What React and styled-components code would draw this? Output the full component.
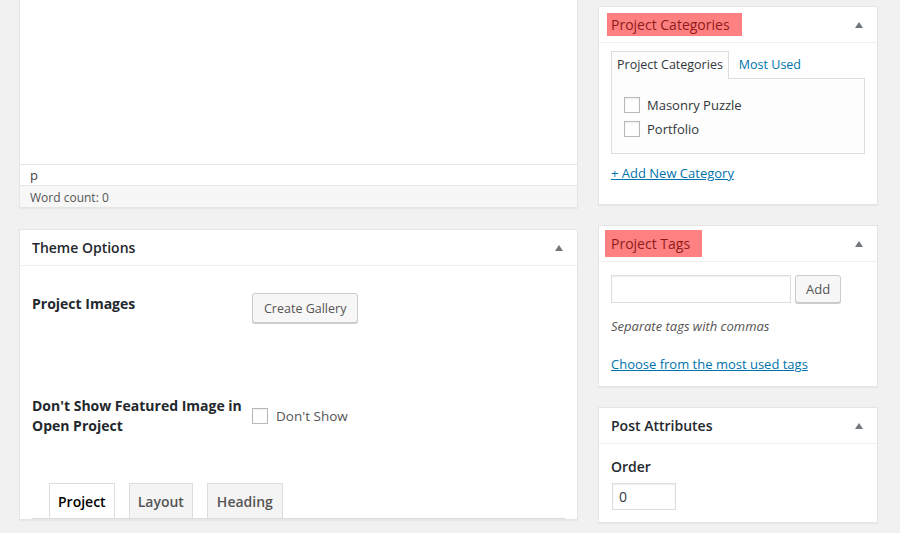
import React from "react";
import styled, { createGlobalStyle } from "styled-components";

const GlobalStyle = createGlobalStyle`
  html, body {
    margin: 0;
    padding: 0;
    background: #f1f1f1;
    font-family: "Open Sans", "Noto Sans", sans-serif;
    font-size: 13px;
    color: #23282d;
    overflow: hidden;
  }
  * { box-sizing: border-box; }
`;

const Page = styled.div`
  display: flex;
  align-items: flex-start;
  gap: 20px;
  padding-left: 19px;
  width: 900px;
  height: 533px;
  overflow: hidden;
`;

const MainColumn = styled.div`
  width: 559px;
  display: flex;
  flex-direction: column;
  gap: 21px;
`;

const SideColumn = styled.div`
  width: 280px;
  display: flex;
  flex-direction: column;
  gap: 20px;
  padding-top: 6px;
`;

const Postbox = styled.div`
  background: #fff;
  border: 1px solid #e5e5e5;
  border-top: ${(p) => (p.$cut ? "none" : "1px solid #e5e5e5")};
  box-shadow: 0 1px 1px rgba(0, 0, 0, 0.04);
`;

const Header = styled.div`
  height: 36px;
  display: flex;
  align-items: center;
  justify-content: space-between;
  padding: 0 14px 0 12px;
  border-bottom: 1px solid #eee;
`;

const Title = styled.h2`
  margin: 0;
  font-size: 14px;
  font-weight: 600;
  line-height: 1.4;
  color: #23282d;
`;

const Highlight = styled.span`
  display: inline-block;
  background: #ff8080;
  color: #8e1b1b;
  font-weight: 400;
  margin-left: ${(p) => p.$ml}px;
  padding: ${(p) => p.$pad};
`;

const Toggle = styled.span`
  width: 0;
  height: 0;
  border-left: 4px solid transparent;
  border-right: 4px solid transparent;
  border-bottom: 6px solid #72777c;
`;

const EditorArea = styled.div`
  height: 165px;
  border-bottom: 1px solid #e5e5e5;
`;

const PathRow = styled.div`
  height: 21px;
  padding: 0 10px;
  line-height: 20px;
  font-size: 13px;
  border-bottom: 1px solid #e5e5e5;
  color: #444;
`;

const StatusRow = styled.div`
  height: 21px;
  padding: 0 10px;
  line-height: 23px;
  font-size: 12px;
  background: #f7f7f7;
  color: #555;
`;

const Inside = styled.div`
  padding: ${(p) => p.$pad || "12px"};
`;

const OptionRow = styled.div`
  display: flex;
  align-items: ${(p) => p.$align || "flex-start"};
  min-height: ${(p) => p.$h || 0}px;
`;

const OptionLabel = styled.div`
  width: 220px;
  padding-top: ${(p) => p.$pt || 0}px;
  font-size: 14px;
  font-weight: 700;
  line-height: 20px;
  color: #23282d;
`;

const Button = styled.button`
  font-family: inherit;
  font-size: ${(p) => p.$fs || 13}px;
  color: #555;
  background: #f7f7f7;
  border: 1px solid #ccc;
  border-radius: 3px;
  box-shadow: 0 1px 0 #ccc;
  height: ${(p) => p.$h || 30}px;
  padding: 0 ${(p) => p.$px || 12}px;
  cursor: pointer;
`;

const Check = styled.span`
  display: inline-block;
  width: 16px;
  height: 16px;
  border: 1px solid #b4b9be;
  background: #fff;
  box-shadow: inset 0 1px 2px rgba(0, 0, 0, 0.07);
  flex-shrink: 0;
`;

const CheckLabel = styled.label`
  display: flex;
  align-items: center;
  gap: ${(p) => p.$gap || 8}px;
  font-size: ${(p) => p.$fs || 14}px;
  color: ${(p) => p.$color || "#555"};
  line-height: 24px;
`;

const Tabs = styled.div`
  display: flex;
  gap: 14px;
  padding-left: 17px;
  border-bottom: 1px solid #ddd;
`;

const Tab = styled.div`
  height: 35px;
  padding: 0 ${(p) => p.$px}px;
  display: flex;
  align-items: center;
  font-size: 14px;
  font-weight: 600;
  border: 1px solid #ddd;
  border-bottom: none;
  margin-bottom: ${(p) => (p.$active ? "-1px" : "0")};
  background: ${(p) => (p.$active ? "#fff" : "#f4f4f4")};
  color: ${(p) => (p.$active ? "#000" : "#555")};
`;

const CatTabs = styled.div`
  display: flex;
  align-items: flex-end;
  gap: 4px;
`;

const CatTab = styled.div`
  height: 28px;
  padding: 0 5px 2px;
  display: flex;
  align-items: center;
  font-size: 12.5px;
  color: ${(p) => (p.$active ? "#32373c" : "#0073aa")};
  border: ${(p) => (p.$active ? "1px solid #ddd" : "1px solid transparent")};
  border-bottom: none;
  background: ${(p) => (p.$active ? "#fdfdfd" : "transparent")};
  margin-bottom: -1px;
  position: relative;
`;

const CatPanel = styled.div`
  width: 254px;
  height: 76px;
  border: 1px solid #ddd;
  background: #fdfdfd;
  padding: 14px 12px 0;
  display: flex;
  flex-direction: column;
`;

const Link = styled.a`
  display: block;
  font-size: 13px;
  color: #0073aa;
  text-decoration: underline;
  margin-top: ${(p) => p.$mt || 0}px;
  line-height: 20px;
`;

const TagRow = styled.div`
  display: flex;
  gap: 4px;
  margin-top: 2px;
`;

const TextInput = styled.input`
  width: ${(p) => p.$w}px;
  height: ${(p) => p.$h || 28}px;
  border: 1px solid #ddd;
  box-shadow: inset 0 1px 2px rgba(0, 0, 0, 0.07);
  background: #fff;
  font-family: inherit;
  font-size: 14px;
  color: #32373c;
  padding: 0 6px;
  margin-left: ${(p) => p.$ml || 0}px;
  outline: none;
`;

const Hint = styled.p`
  margin: ${(p) => p.$m};
  font-size: 13px;
  font-style: italic;
  color: #555;
  line-height: 20px;
`;

const FieldLabel = styled.p`
  margin: 4px 0 6px;
  font-size: 14px;
  font-weight: 600;
  line-height: 20px;
`;

const Spacer = styled.div`
  height: ${(p) => p.$h}px;
`;

const Arrow = () => <Toggle aria-hidden="true" />;

export default function App() {
  return (
    <>
      <GlobalStyle />
      <Page>
        <MainColumn>
          <Postbox $cut>
            <EditorArea />
            <PathRow>p</PathRow>
            <StatusRow>Word count: 0</StatusRow>
          </Postbox>

          <Postbox>
            <Header>
              <Title>Theme Options</Title>
              <Arrow />
            </Header>
            <Inside $pad="27px 12px 0">
              <OptionRow $h={103}>
                <OptionLabel $pt={1}>Project Images</OptionLabel>
                <Button $fs={12.5} $px={11}>Create Gallery</Button>
              </OptionRow>
              <OptionRow $align="center" $h={40}>
                <OptionLabel>
                  Don't Show Featured Image in
                  <br />
                  Open Project
                </OptionLabel>
                <CheckLabel $fs={13.5}>
                  <Check />
                  Don't Show
                </CheckLabel>
              </OptionRow>
              <Spacer $h={47} />
              <Tabs>
                <Tab $active $px={8}>Project</Tab>
                <Tab $px={8}>Layout</Tab>
                <Tab $px={9}>Heading</Tab>
              </Tabs>
            </Inside>
          </Postbox>
        </MainColumn>

        <SideColumn>
          <Postbox>
            <Header>
              <Title>
                <Highlight $ml={-4} $pad="2px 12px 2px 4px">
                  Project Categories
                </Highlight>
              </Title>
              <Arrow />
            </Header>
            <Inside $pad="8px 12px 21px">
              <CatTabs>
                <CatTab $active>Project Categories</CatTab>
                <CatTab>Most Used</CatTab>
              </CatTabs>
              <CatPanel>
                <CheckLabel $fs={13} $gap={7} $color="#32373c">
                  <Check />
                  Masonry Puzzle
                </CheckLabel>
                <CheckLabel $fs={13} $gap={7} $color="#32373c">
                  <Check />
                  Portfolio
                </CheckLabel>
              </CatPanel>
              <Link $mt={9}>+ Add New Category</Link>
            </Inside>
          </Postbox>

          <Postbox>
            <Header>
              <Title>
                <Highlight $ml={-6} $pad="4px 12px 4px 6px">
                  Project Tags
                </Highlight>
              </Title>
              <Arrow />
            </Header>
            <Inside $pad="11px 12px 12px">
              <TagRow>
                <TextInput $w={180} />
                <Button $h={28} $px={10}>
                  Add
                </Button>
              </TagRow>
              <Hint $m="13px 0 0">Separate tags with commas</Hint>
              <Link $mt={18}>Choose from the most used tags</Link>
            </Inside>
          </Postbox>

          <Postbox>
            <Header>
              <Title>Post Attributes</Title>
              <Arrow />
            </Header>
            <Inside $pad="9px 12px 12px">
              <FieldLabel>Order</FieldLabel>
              <TextInput $w={64} $h={27} $ml={1} defaultValue="0" />
            </Inside>
          </Postbox>
        </SideColumn>
      </Page>
    </>
  );
}
